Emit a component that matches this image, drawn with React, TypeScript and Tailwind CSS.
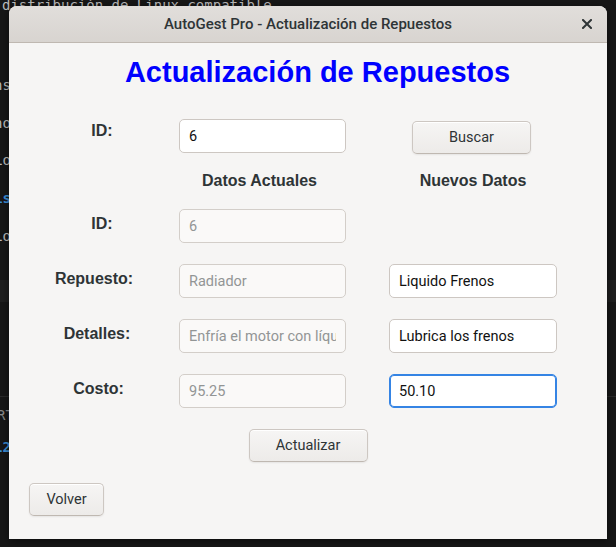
import React from "react";

const labelCss =
  "font-['Liberation_Sans',Arial,sans-serif] font-bold text-[16px] leading-[20px] text-[#2e3436]";

const gtkFont = "font-['Roboto','Noto_Sans',sans-serif]";

const entryBase = `${gtkFont} h-[34px] w-full rounded-[5px] border px-[9px] text-[14.5px] outline-none`;

const Entry = ({
  value,
  disabled,
  focused,
}: {
  value: string;
  disabled?: boolean;
  focused?: boolean;
}) => {
  const look = disabled
    ? "bg-[#faf9f8] border-[#d3cec9] text-[#929595]"
    : focused
    ? "bg-white border-[#3584e4] shadow-[inset_0_0_0_1px_#3584e4] text-[#111]"
    : "bg-white border-[#cdc7c2] text-[#111]";
  return (
    <input
      className={`${entryBase} ${look}`}
      value={value}
      readOnly
      tabIndex={-1}
    />
  );
};

const GtkButton = ({ text, extraCss = "" }: { text: string; extraCss?: string }) => (
  <button
    className={`${gtkFont} h-[33px] rounded-[5px] border border-[#cdc7c2] border-b-[#bfb8b1] bg-gradient-to-b from-[#f6f5f4] to-[#edebe9] text-[14.5px] text-[#2e3436] shadow-[inset_0_1px_white,0_1px_2px_rgba(0,0,0,0.07)] ${extraCss}`}
  >
    {text}
  </button>
);

interface FieldRowProps {
  label: string;
  labelCss?: string;
  current: string;
  next?: string;
  focused?: boolean;
  extraCss?: string;
}

const FieldRow = ({
  label,
  labelCss: labelShift = "",
  current,
  next,
  focused,
  extraCss = "",
}: FieldRowProps) => (
  <div className={`flex pl-[20px] ${extraCss}`}>
    <div className={`w-[138px] pt-[5px] text-center ${labelCss} ${labelShift}`}>
      {label}
    </div>
    <div className="ml-[12px] w-[167px]">
      <Entry value={current} disabled />
    </div>
    <div className="ml-[43px] w-[168px]">
      {next !== undefined ? <Entry value={next} focused={focused} /> : null}
    </div>
  </div>
);

const Backdrop = () => (
  <div className="absolute inset-0 font-['DejaVu_Sans_Mono',monospace] text-[14px] leading-[18px] text-[#bdbdbd]">
    <div className="absolute left-0 top-[280px] h-[22px] w-full bg-[#1f1f1f]" />
    <div className="absolute left-0 top-[396px] h-[1px] w-full bg-[#2a2a2a]" />
    <div className="absolute left-[2px] top-[-4px] whitespace-nowrap">
      distribución de Linux compatible
    </div>
    <div className="absolute left-[-6px] top-[76px]">ns</div>
    <div className="absolute left-[-6px] top-[114px]">no</div>
    <div className="absolute left-[-6px] top-[151px]">Lo</div>
    <div className="absolute left-[-6px] top-[189px] font-bold text-[#3b8ed8]">is</div>
    <div className="absolute left-[-6px] top-[227px]">Lo</div>
    <div className="absolute left-[-3px] top-[406px] text-[#8a8a8a]">RT</div>
    <div className="absolute left-[-6px] top-[438px] font-bold text-[#3b8ed8]">12</div>
  </div>
);

export default function App() {
  return (
    <div className="relative h-[547px] w-[616px] overflow-hidden bg-[#171717]">
      <Backdrop />
      <div className="relative ml-[9px] pt-[6px]">
        <div className="flex h-[533px] w-[598px] flex-col overflow-hidden rounded-t-[8px] bg-[#f6f5f4] shadow-[0_2px_8px_rgba(0,0,0,0.5)]">
          <div className="relative flex h-[37px] shrink-0 items-center justify-center border-b border-[#bfb8b1] bg-gradient-to-b from-[#e1dedb] to-[#d8d4d0]">
            <span
              className={`${gtkFont} text-[15px] font-medium text-[#2e3436]`}
            >
              AutoGest Pro - Actualización de Repuestos
            </span>
            <span className="absolute right-[14px] top-[12px] flex h-[12px] w-[12px] items-center justify-center">
              <svg width="10" height="10" viewBox="0 0 10 10">
                <path
                  d="M1 1L9 9M9 1L1 9"
                  stroke="#2e3436"
                  strokeWidth="2"
                  strokeLinecap="square"
                />
              </svg>
            </span>
          </div>

          <div className="flex justify-center pl-[19px] pt-[13px]">
            <h1 className="font-['Liberation_Sans',Arial,sans-serif] text-[29px] font-bold leading-[33px] text-[#0000ff]">
              Actualización de Repuestos
            </h1>
          </div>

          <div className="mt-[30px] flex pl-[20px]">
            <div className={`w-[138px] pl-[8px] pt-[2px] text-center ${labelCss}`}>
              ID:
            </div>
            <div className="ml-[12px] w-[167px]">
              <Entry value="6" />
            </div>
            <div className="ml-[43px] flex w-[168px] pl-[23px] pt-[2px]">
              <GtkButton text="Buscar" extraCss="w-[119px]" />
            </div>
          </div>

          <div className={`mt-[17px] flex pl-[20px] ${labelCss}`}>
            <div className="w-[138px]" />
            <div className="ml-[12px] w-[167px] pr-[6px] text-center">
              Datos Actuales
            </div>
            <div className="ml-[43px] w-[168px] text-center">Nuevos Datos</div>
          </div>

          <FieldRow label="ID:" labelCss="pl-[8px]" current="6" extraCss="mt-[18px]" />
          <FieldRow
            label="Repuesto:"
            labelCss="pr-[8px]"
            current="Radiador"
            next="Liquido Frenos"
            extraCss="mt-[21px]"
          />
          <FieldRow
            label="Detalles:"
            labelCss="pr-[2px]"
            current="Enfría el motor con líquido refrigerante"
            next="Lubrica los frenos"
            extraCss="mt-[21px]"
          />
          <FieldRow
            label="Costo:"
            labelCss="pl-[1px]"
            current="95.25"
            next="50.10"
            focused
            extraCss="mt-[21px]"
          />

          <div className="mt-[21px] flex justify-center">
            <GtkButton text="Actualizar" extraCss="w-[119px]" />
          </div>

          <div className="mt-[21px] pl-[20px]">
            <GtkButton text="Volver" extraCss="w-[75px]" />
          </div>
        </div>
      </div>
    </div>
  );
}
